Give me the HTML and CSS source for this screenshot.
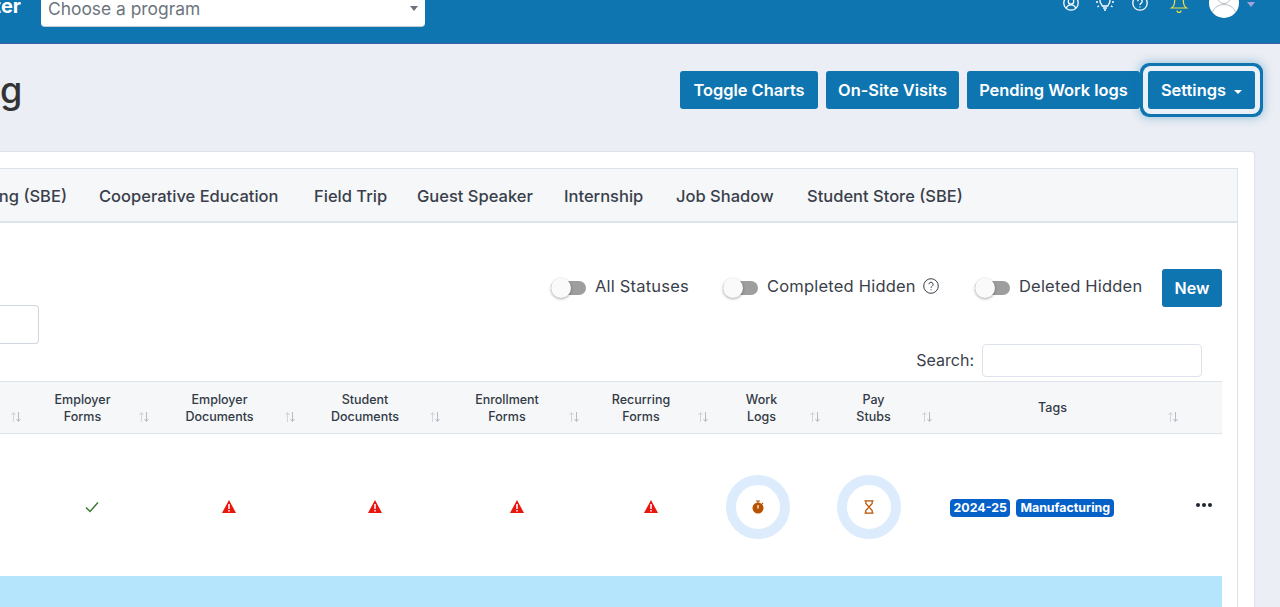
FILE: index.html
```html
<!DOCTYPE html>
<html lang="en">
<head>
    <meta charset="UTF-8">
    <meta name="viewport" content="width=device-width, initial-scale=1.0">
    <title>Work Based Learning</title>
    <link rel="stylesheet" href="styles.css">
</head>
<body>
    <header class="topbar">
        <div class="brand">ter</div>
        <div class="program-select">
            <span>Choose a program</span>
            <i class="select-caret"></i>
        </div>
        <div class="top-icons">
            <svg class="top-icon icon-user" viewBox="0 0 16 16" fill="none" stroke="#fff" stroke-width="1.300"><circle cx="8" cy="8" r="7.200"/><circle cx="8" cy="6.400" r="2.700"/><path d="M3.200 13.200c.8-2.400 2.600-3.400 4.800-3.400s4 1 4.800 3.400"/></svg>
            <svg class="top-icon icon-bulb" viewBox="0 0 20 16" fill="none" stroke="#fff" stroke-width="1.300"><path d="M7.200 11c-.2-1.600-2.200-2.400-2.200-5a5 5 0 0 1 10 0c0 2.600-2 3.400-2.200 5z"/><path d="M8 13h4M9 15h2"/><path d="M1 7h2M17 7h2M2.500 12l1.500-1.200M17.500 12 16 10.800"/></svg>
            <svg class="top-icon icon-help" viewBox="0 0 16 16" fill="none" stroke="#fff" stroke-width="1.300"><circle cx="8" cy="8" r="7.200"/><path d="M5.800 6.200a2.200 2.200 0 1 1 3.400 1.900c-.8.500-1.200 1-1.200 1.900"/><path d="M8 11.600v1"/></svg>
            <svg class="top-icon icon-bell" viewBox="0 0 18 18" fill="none" stroke="#f3e23a" stroke-width="1.200"><path d="M5 1 4.500 8C4.300 10.500 3 12 1.500 13h15C15 12 13.700 10.500 13.500 8L13 1"/><path d="M7 15.500a2 2 0 0 0 4 0"/><path d="M11.500 1v4" stroke="#fff"/></svg>
            <svg class="avatar" viewBox="0 0 30 30"><circle cx="15" cy="15" r="15" fill="#fff"/><circle cx="15" cy="9" r="6.500" fill="none" stroke="#b9bec5" stroke-width="1"/><path d="M3.500 24c2-5 6.500-7.500 11.500-7.500S24.500 19 26.500 24" fill="none" stroke="#b9bec5" stroke-width="1"/></svg>
            <i class="avatar-caret"></i>
        </div>
    </header>

    <main class="page">
        <div class="title-row">
            <h1 class="page-title">g</h1>
            <div class="actions">
                <button class="btn btn-charts">Toggle Charts</button>
                <button class="btn btn-visits">On-Site Visits</button>
                <button class="btn btn-pending">Pending Work logs</button>
                <button class="btn btn-settings">Settings <i class="btn-caret"></i></button>
            </div>
        </div>

        <section class="card">
            <nav class="tabs">
                <a class="tab tab-cut">ng (SBE)</a>
                <a class="tab">Cooperative Education</a>
                <a class="tab">Field Trip</a>
                <a class="tab">Guest Speaker</a>
                <a class="tab">Internship</a>
                <a class="tab">Job Shadow</a>
                <a class="tab">Student Store (SBE)</a>
            </nav>

            <div class="panel">
                <div class="filters">
                    <div class="filter-input"></div>
                    <div class="toggles">
                        <label class="toggle toggle-all"><span class="switch"></span>All Statuses</label>
                        <label class="toggle toggle-completed"><span class="switch"></span>Completed Hidden
                            <svg class="help" viewBox="0 0 16 16" fill="none" stroke="#3a3f4b" stroke-width="1"><circle cx="8" cy="8" r="7.300"/><path d="M5.900 6.300a2.100 2.100 0 1 1 3.300 1.800c-.8.500-1.200 1-1.200 1.700"/><path d="M8 11.300v1"/></svg>
                        </label>
                        <label class="toggle toggle-deleted"><span class="switch"></span>Deleted Hidden</label>
                        <button class="btn btn-new">New</button>
                    </div>
                </div>

                <div class="search-row">
                    <label class="search-label">Search:</label>
                    <div class="search-input"></div>
                </div>

                <table class="log-table">
                    <colgroup>
                        <col class="c-0"><col class="c-1"><col class="c-2"><col class="c-3"><col class="c-4"><col class="c-5"><col class="c-6"><col class="c-7"><col class="c-8"><col class="c-9">
                    </colgroup>
                    <thead>
                        <tr>
                            <th><div class="th-in"><span></span><svg class="sort" viewBox="0 0 12 12"><path d="M3.500 11V2M1.500 4l2-2.500 2 2.500" stroke="#cfd5dc"/><path d="M8.500 1v9.500M6.500 8l2 2.500 2-2.500" stroke="#b4bbc4"/></svg></div></th>
                            <th><div class="th-in"><span>Employer<br>Forms</span><svg class="sort" viewBox="0 0 12 12"><path d="M3.500 11V2M1.500 4l2-2.500 2 2.500" stroke="#cfd5dc"/><path d="M8.500 1v9.500M6.500 8l2 2.500 2-2.500" stroke="#b4bbc4"/></svg></div></th>
                            <th><div class="th-in"><span>Employer<br>Documents</span><svg class="sort" viewBox="0 0 12 12"><path d="M3.500 11V2M1.500 4l2-2.500 2 2.500" stroke="#cfd5dc"/><path d="M8.500 1v9.500M6.500 8l2 2.500 2-2.500" stroke="#b4bbc4"/></svg></div></th>
                            <th><div class="th-in"><span>Student<br>Documents</span><svg class="sort" viewBox="0 0 12 12"><path d="M3.500 11V2M1.500 4l2-2.500 2 2.500" stroke="#cfd5dc"/><path d="M8.500 1v9.500M6.500 8l2 2.500 2-2.500" stroke="#b4bbc4"/></svg></div></th>
                            <th><div class="th-in"><span>Enrollment<br>Forms</span><svg class="sort" viewBox="0 0 12 12"><path d="M3.500 11V2M1.500 4l2-2.500 2 2.500" stroke="#cfd5dc"/><path d="M8.500 1v9.500M6.500 8l2 2.500 2-2.500" stroke="#b4bbc4"/></svg></div></th>
                            <th><div class="th-in"><span>Recurring<br>Forms</span><svg class="sort" viewBox="0 0 12 12"><path d="M3.500 11V2M1.500 4l2-2.500 2 2.500" stroke="#cfd5dc"/><path d="M8.500 1v9.500M6.500 8l2 2.500 2-2.500" stroke="#b4bbc4"/></svg></div></th>
                            <th><div class="th-in"><span>Work<br>Logs</span><svg class="sort" viewBox="0 0 12 12"><path d="M3.500 11V2M1.500 4l2-2.500 2 2.500" stroke="#cfd5dc"/><path d="M8.500 1v9.500M6.500 8l2 2.500 2-2.500" stroke="#b4bbc4"/></svg></div></th>
                            <th><div class="th-in"><span>Pay<br>Stubs</span><svg class="sort" viewBox="0 0 12 12"><path d="M3.500 11V2M1.500 4l2-2.500 2 2.500" stroke="#cfd5dc"/><path d="M8.500 1v9.500M6.500 8l2 2.500 2-2.500" stroke="#b4bbc4"/></svg></div></th>
                            <th><div class="th-in"><span>Tags</span><svg class="sort" viewBox="0 0 12 12"><path d="M3.500 11V2M1.500 4l2-2.500 2 2.500" stroke="#cfd5dc"/><path d="M8.500 1v9.500M6.500 8l2 2.500 2-2.500" stroke="#b4bbc4"/></svg></div></th>
                            <th></th>
                        </tr>
                    </thead>
                    <tbody>
                        <tr class="row-main">
                            <td></td>
                            <td class="cell-icon"><svg class="check" viewBox="0 0 14 12" fill="none" stroke="#3c7a35" stroke-width="1.500"><path d="M1 6.500 5 10.500 13 1.500"/></svg></td>
                            <td class="cell-icon"><svg class="warn" viewBox="0 0 14 13"><path d="M7 0 14 13H0z" fill="#e8160f"/><path d="M7 4v5M7 10v1.600" stroke="#fff" stroke-width="1.500"/></svg></td>
                            <td class="cell-icon"><svg class="warn" viewBox="0 0 14 13"><path d="M7 0 14 13H0z" fill="#e8160f"/><path d="M7 4v5M7 10v1.600" stroke="#fff" stroke-width="1.500"/></svg></td>
                            <td class="cell-icon"><svg class="warn" viewBox="0 0 14 13"><path d="M7 0 14 13H0z" fill="#e8160f"/><path d="M7 4v5M7 10v1.600" stroke="#fff" stroke-width="1.500"/></svg></td>
                            <td class="cell-icon"><svg class="warn" viewBox="0 0 14 13"><path d="M7 0 14 13H0z" fill="#e8160f"/><path d="M7 4v5M7 10v1.600" stroke="#fff" stroke-width="1.500"/></svg></td>
                            <td class="cell-left"><div class="ring"><svg class="ring-icon" viewBox="0 0 12 14"><circle cx="6" cy="8" r="5.500" fill="#b85200"/><path d="M4 1h4M6 1v2M10 3l1 1" stroke="#b85200" stroke-width="1.200" fill="none"/><path d="M6 5v3.500" stroke="#fff" stroke-width="1.200"/></svg></div></td>
                            <td class="cell-left"><div class="ring ring-pay"><svg class="ring-icon" viewBox="0 0 12 14" fill="none" stroke="#b85200" stroke-width="1.200"><path d="M1.500 .8h9M1.500 13.200h9"/><path d="M2.800 1v2.500L6 7l3.200-3.500V1M2.800 13v-2.500L6 7l3.200 3.500V13"/></svg></div></td>
                            <td class="cell-left"><span class="badge badge-year">2024-25</span><span class="badge">Manufacturing</span></td>
                            <td class="cell-dots"><svg class="dots" viewBox="0 0 16 4" fill="#1f2430"><circle cx="2" cy="2" r="2"/><circle cx="8" cy="2" r="2"/><circle cx="14" cy="2" r="2"/></svg></td>
                        </tr>
                        <tr class="row-info"><td colspan="10"></td></tr>
                    </tbody>
                </table>
            </div>
        </section>
    </main>
</body>
</html>
```

FILE: styles.css
```css
body {
    font-family: Inter, "Noto Sans", sans-serif;
    margin: 0;
    width: 1280px;
    height: 607px;
    overflow: hidden;
    background-color: #ebeef4;
    color: #3a3f4b;
}

/* top bar */
.topbar {
    display: flex;
    height: 43px;
    background-color: #0f75b1;
    border-bottom: 1px solid #3f5ea8;
}
.brand {
    width: 21px;
    margin-top: -6px;
    height: 24px;
    display: flex;
    justify-content: flex-end;
    overflow: hidden;
    color: #fff;
    font-size: 20px;
    font-weight: 700;
    line-height: 24px;
}
.program-select {
    display: flex;
    align-items: center;
    justify-content: space-between;
    box-sizing: border-box;
    width: 384px;
    height: 37px;
    margin: -10px 0 0 20px;
    padding: 0 7px 0 7px;
    background-color: #fff;
    border-bottom: 1px solid #c4cbd3;
    border-radius: 4px;
    color: #6c757d;
    font-size: 17.400px;
}
.select-caret {
    border-top: 5px solid #6c757d;
    border-left: 4px solid transparent;
    border-right: 4px solid transparent;
}
.top-icons {
    display: flex;
    align-items: flex-start;
    margin-left: auto;
    padding-right: 25px;
}
.top-icon {
    display: block;
    width: 16px;
    height: 16px;
    margin-top: -5px;
}
.icon-bulb {
    width: 20px;
    margin-left: 16px;
}
.icon-help {
    margin-left: 17px;
}
.icon-bell {
    width: 18px;
    height: 18px;
    margin: -5px 0 0 22px;
}
.avatar {
    display: block;
    width: 30px;
    height: 30px;
    margin: -12px 0 0 21px;
}
.avatar-caret {
    margin: 2px 0 0 8px;
    border-top: 5px solid #a3a3dc;
    border-left: 4px solid transparent;
    border-right: 4px solid transparent;
}

/* page */
.page {
    padding-right: 25px;
}
.title-row {
    display: flex;
    align-items: flex-start;
    justify-content: space-between;
    height: 107px;
}
.page-title {
    margin: 23px 0 0;
    color: #333;
    font-size: 36px;
    font-weight: 500;
    line-height: 46px;
}
.actions {
    display: flex;
    gap: 8px;
    margin-top: 27px;
}
.btn {
    box-sizing: border-box;
    height: 38px;
    padding: 0;
    background-color: #0f75b1;
    border: 0;
    border-radius: 3px;
    color: #fff;
    font-family: inherit;
    font-size: 16.400px;
    font-weight: 600;
    white-space: nowrap;
}
.btn-charts { width: 138px; }
.btn-visits { width: 133px; }
.btn-pending { width: 173px; }
.btn-settings {
    width: 107px;
    box-shadow: 0 0 0 5px #e9f0f7, 0 0 0 8px #0f75b1, 0 0 10px 9px rgba(15, 117, 177, 0.35);
}
.btn-caret {
    display: inline-block;
    margin-left: 4px;
    vertical-align: 2px;
    border-top: 4px solid #fff;
    border-left: 4px solid transparent;
    border-right: 4px solid transparent;
}
.btn-new {
    width: 60px;
    font-size: 16px;
}

/* card and tabs */
.card {
    box-sizing: border-box;
    height: 456px;
    padding: 16px 16px 0 0;
    background-color: #fff;
    border: 1px solid #dde3ea;
    border-left: 0;
    border-bottom: 0;
    border-radius: 0 4px 0 0;
}
.tabs {
    display: grid;
    grid-template-columns: 83px 215px 103px 147px 112px 131px 185px;
    box-sizing: border-box;
    height: 55px;
    background-color: #f5f7f9;
    border-top: 1px solid #dde3ea;
    border-right: 1px solid #dde3ea;
    border-bottom: 2px solid #dde3ea;
}
.tab {
    display: flex;
    align-items: center;
    padding: 1px 0 0 16px;
    color: #3a3f4b;
    font-size: 16.500px;
    font-weight: 500;
    white-space: nowrap;
}
.tab-cut {
    padding: 1px 16px 0 0;
    justify-content: flex-end;
}

/* panel */
.panel {
    height: 384px;
    padding-right: 15px;
    border-right: 1px solid #dde3ea;
}
.filters {
    display: flex;
    justify-content: space-between;
    padding-top: 46px;
}
.filter-input {
    box-sizing: border-box;
    width: 39px;
    height: 39px;
    margin-top: 36px;
    background-color: #fff;
    border: 1px solid #d0d6dd;
    border-left: 0;
    border-radius: 0 4px 4px 0;
}
.toggles {
    display: flex;
    align-items: flex-start;
}
.toggle {
    display: flex;
    align-items: center;
    box-sizing: border-box;
    height: 36px;
    padding-bottom: 2px;
    font-size: 16.500px;
    letter-spacing: 0.2px;
    white-space: nowrap;
}
.toggle-all { width: 172px; }
.toggle-completed { width: 252px; }
.toggle-deleted { width: 187px; }
.switch {
    position: relative;
    flex: none;
    width: 35px;
    height: 14px;
    margin: 4px 9px 0 0;
    background-color: #9e9e9e;
    border-radius: 7px;
}
.switch::before {
    content: "";
    position: absolute;
    left: 0;
    top: -3px;
    width: 20px;
    height: 20px;
    background-color: #fafafa;
    border-radius: 50%;
    box-shadow: 0 1px 3px rgba(0, 0, 0, 0.35);
}
.help {
    width: 16px;
    height: 16px;
    margin-left: 7px;
}
.search-row {
    display: flex;
    align-items: center;
    justify-content: flex-end;
    gap: 8px;
    margin-bottom: 4px;
    padding-right: 20px;
    font-size: 16px;
}
.search-label {
    padding-bottom: 2px;
}
.search-input {
    box-sizing: border-box;
    width: 220px;
    height: 33px;
    border: 1px solid #dde3ea;
    border-radius: 4px;
}

/* table */
.log-table {
    width: 1222px;
    table-layout: fixed;
    border-collapse: collapse;
}
.c-0 { width: 25px; }
.c-1 { width: 128px; }
.c-2 { width: 146px; }
.c-3 { width: 145px; }
.c-4 { width: 139px; }
.c-5 { width: 129px; }
.c-6 { width: 112px; }
.c-7 { width: 112px; }
.c-8 { width: 246px; }
.c-9 { width: 40px; }
.log-table th {
    height: 51px;
    padding: 0;
    background-color: #f5f7f9;
    border-top: 1px solid #dde3ea;
    border-bottom: 1px solid #dde3ea;
    color: #333a45;
    font-size: 12.500px;
    font-weight: 500;
    line-height: 17px;
}
.th-in {
    display: flex;
    align-items: center;
    height: 34px;
    padding-right: 3px;
}
.th-in span {
    flex: 1;
    padding-left: 2px;
    text-align: center;
}
.sort {
    align-self: flex-end;
    width: 12px;
    height: 12px;
    margin-bottom: 2px;
    fill: none;
    stroke-width: 1;
}
.row-main td {
    height: 138px;
    padding: 4px 0 0;
}
.row-main .cell-icon {
    padding-left: 6px;
    text-align: center;
}
.row-main .cell-left {
    padding-left: 14px;
    white-space: nowrap;
}
.row-main .cell-dots {
    padding-right: 10px;
    text-align: right;
}
.check {
    display: inline-block;
    width: 14px;
    height: 12px;
}
.warn {
    display: inline-block;
    width: 14px;
    height: 13px;
}
.ring {
    display: flex;
    align-items: center;
    justify-content: center;
    box-sizing: border-box;
    width: 64px;
    height: 64px;
    background-color: #fff;
    border: 10px solid #ddecfd;
    border-radius: 50%;
}
.ring-pay {
    margin-left: -1px;
}
.ring-icon {
    width: 12px;
    height: 14px;
}
.badge {
    display: inline-block;
    height: 18px;
    margin-right: 6px;
    padding: 0 4px;
    background-color: #0560c8;
    border-radius: 4px;
    color: #fff;
    font-size: 12.400px;
    font-weight: 700;
    line-height: 18px;
    vertical-align: 1px;
}
.badge-year {
    padding: 0 3.500px;
}
.dots {
    display: inline-block;
    width: 16px;
    height: 4px;
    vertical-align: 6px;
}
.row-info td {
    height: 31px;
    padding: 0;
    background-color: #b5e5fc;
}
```
